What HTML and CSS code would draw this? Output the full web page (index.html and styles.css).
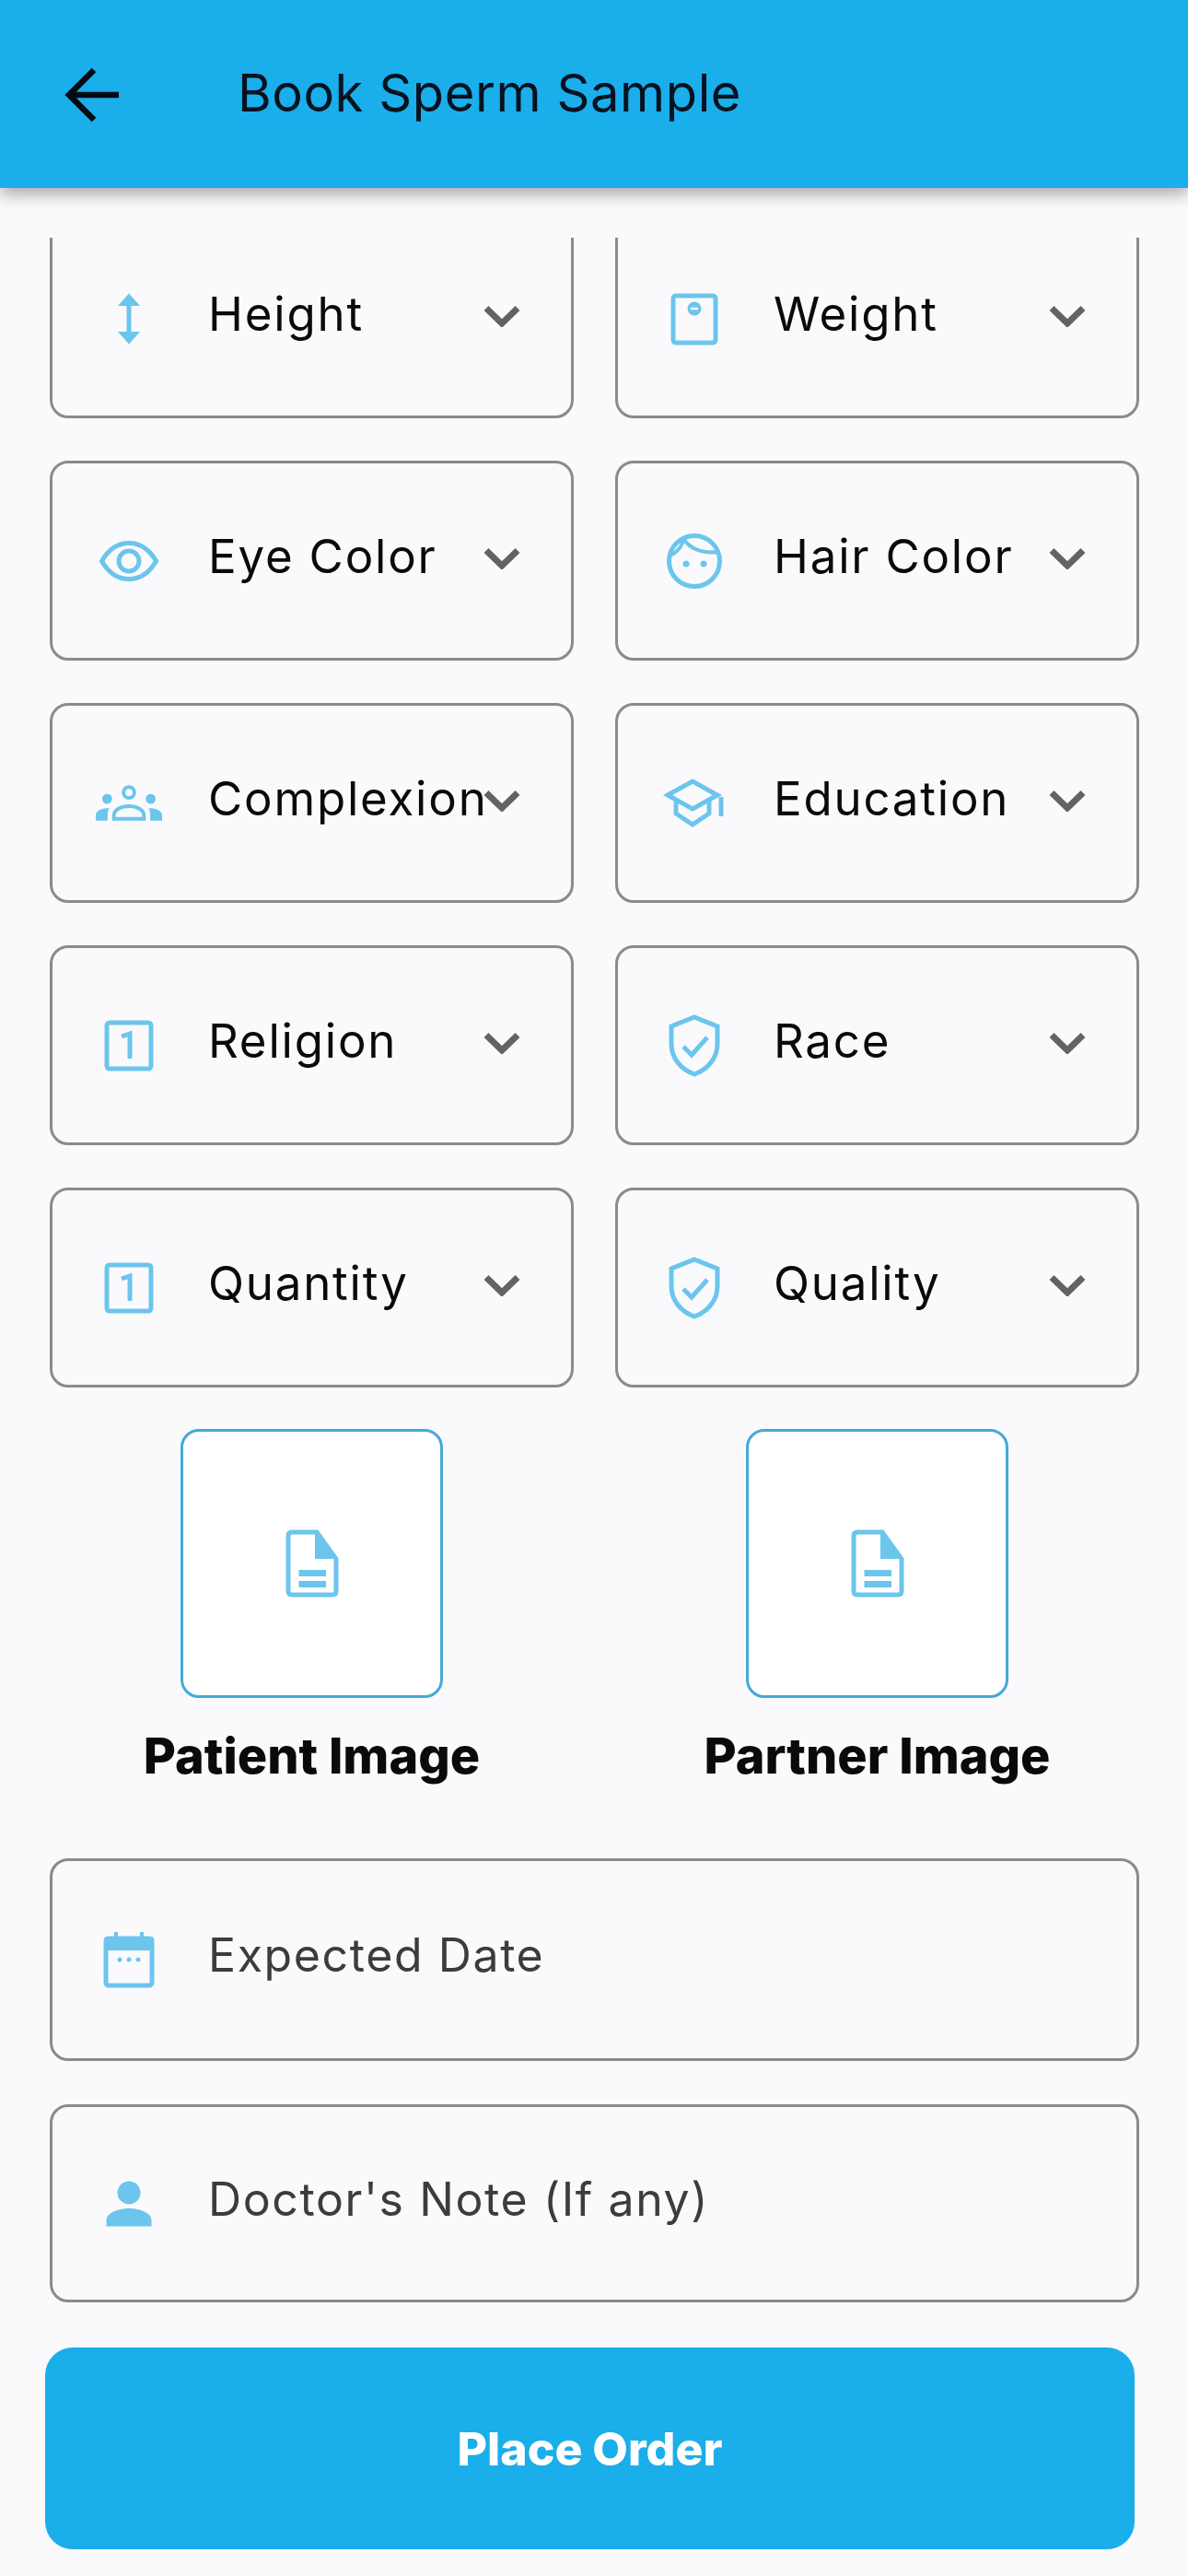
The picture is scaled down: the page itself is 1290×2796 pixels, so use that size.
FILE: index.html
```html
<!DOCTYPE html>
<html lang="en">
<head>
    <meta charset="UTF-8">
    <meta name="viewport" content="width=device-width, initial-scale=1.0">
    <title>Book Sperm Sample</title>
    <link rel="stylesheet" href="styles.css">
</head>
<body>
    <!-- shared icons -->
    <svg class="icon-defs" aria-hidden="true">
        <symbol id="i-chevron" viewBox="0 0 40 24">
            <path class="chev" d="M3 3.5L20 20L37 3.5"/>
        </symbol>
        <symbol id="i-height" viewBox="0 0 72 72">
            <path class="line" d="M36 18V54"/>
            <path class="solid" d="M36 8.5L48 22H24ZM36 63.5L48 50H24Z"/>
        </symbol>
        <symbol id="i-weight" viewBox="0 0 72 72">
            <rect class="line" x="13" y="11" width="46" height="51" rx="3"/>
            <circle class="solid" cx="36" cy="25" r="7.5"/>
            <path class="cut" d="M32 25H40"/>
        </symbol>
        <symbol id="i-eye" viewBox="0 0 72 72">
            <path class="line" d="M6.500 36C14 23 24 16.500 36 16.500S58 23 65.500 36C58 49 48 55.500 36 55.500S14 49 6.500 36Z"/>
            <circle class="line" cx="36" cy="36" r="11"/>
        </symbol>
        <symbol id="i-face" viewBox="0 0 72 72">
            <circle class="line" cx="36" cy="36" r="27.500"/>
            <path class="thin" d="M24 11C23 20 17 27 9 30M24 11C31 24 47 28 63 26"/>
            <circle class="solid" cx="27" cy="39" r="3.500"/>
            <circle class="solid" cx="46" cy="39" r="3.500"/>
        </symbol>
        <symbol id="i-groups" viewBox="0 0 73 72">
            <circle class="thin" cx="36.500" cy="24" r="6"/>
            <path class="thin" d="M20 53V49C20 43 28 39 36.500 39S53 43 53 49V53Z"/>
            <circle class="solid" cx="12.500" cy="31" r="5.500"/>
            <circle class="solid" cx="60.500" cy="31" r="5.500"/>
            <path class="solid" d="M0 55V49C0 44 7 41 15 41C13 44 13 47 13 55Z"/>
            <path class="solid" d="M73 55V49C73 44 66 41 58 41C60 44 60 47 60 55Z"/>
        </symbol>
        <symbol id="i-school" viewBox="0 0 72 72">
            <path class="line" d="M7 27L34 12L61 27L34 42Z"/>
            <path class="line" d="M16 33V47L34 59L52 47V33"/>
            <path class="line" d="M65 29V50"/>
        </symbol>
        <symbol id="i-number" viewBox="0 0 72 72">
            <rect class="line" x="12" y="11" width="48" height="50" rx="3"/>
            <path class="line" d="M28 26L37 23V50"/>
        </symbol>
        <symbol id="i-shield" viewBox="0 0 72 72">
            <path class="line" d="M36 5L61 15V34C61 50 50 62 36 67C22 62 11 50 11 34V15Z"/>
            <path class="line" d="M24 37L33 46L50 27"/>
        </symbol>
        <symbol id="i-file" viewBox="0 0 80 80">
            <path class="line" d="M18 6H45L66 35V70Q66 74 62 74H18Q14 74 14 70V10Q14 6 18 6Z"/>
            <path class="solid" d="M43 6L68 35H43Z"/>
            <path class="bar" d="M25.500 50.500H55M25.500 62.500H55"/>
        </symbol>
        <symbol id="i-calendar" viewBox="0 0 72 72">
            <rect class="line" x="11" y="13" width="50" height="51" rx="3"/>
            <rect class="solid" x="9" y="11" width="54" height="15" rx="3"/>
            <path class="thin" d="M22 6V13M50 6V13"/>
            <circle class="solid" cx="26" cy="36" r="2.500"/>
            <circle class="solid" cx="36" cy="36" r="2.500"/>
            <circle class="solid" cx="46" cy="36" r="2.500"/>
        </symbol>
        <symbol id="i-person" viewBox="0 0 72 72">
            <circle class="solid" cx="36" cy="24" r="12.500"/>
            <path class="solid" d="M11.500 60.500V54C11.500 46 24 41 36 41S60.500 46 60.500 54V60.500Z"/>
        </symbol>
    </svg>

    <header class="app-bar">
        <svg class="back-icon" viewBox="0 0 64 64">
            <path d="M60 32H8M33 5L6 32L33 59"/>
        </svg>
        <h1 class="app-title">Book Sperm Sample</h1>
    </header>

    <main class="form-area">
        <div class="field-grid">
            <div class="field">
                <svg class="field-icon"><use href="#i-height"/></svg>
                <span class="field-label">Height</span>
                <svg class="chevron"><use href="#i-chevron"/></svg>
            </div>
            <div class="field">
                <svg class="field-icon"><use href="#i-weight"/></svg>
                <span class="field-label">Weight</span>
                <svg class="chevron"><use href="#i-chevron"/></svg>
            </div>
            <div class="field">
                <svg class="field-icon"><use href="#i-eye"/></svg>
                <span class="field-label">Eye Color</span>
                <svg class="chevron"><use href="#i-chevron"/></svg>
            </div>
            <div class="field">
                <svg class="field-icon"><use href="#i-face"/></svg>
                <span class="field-label">Hair Color</span>
                <svg class="chevron"><use href="#i-chevron"/></svg>
            </div>
            <div class="field">
                <svg class="field-icon"><use href="#i-groups"/></svg>
                <span class="field-label">Complexion</span>
                <svg class="chevron"><use href="#i-chevron"/></svg>
            </div>
            <div class="field">
                <svg class="field-icon"><use href="#i-school"/></svg>
                <span class="field-label">Education</span>
                <svg class="chevron"><use href="#i-chevron"/></svg>
            </div>
            <div class="field">
                <svg class="field-icon"><use href="#i-number"/></svg>
                <span class="field-label">Religion</span>
                <svg class="chevron"><use href="#i-chevron"/></svg>
            </div>
            <div class="field">
                <svg class="field-icon"><use href="#i-shield"/></svg>
                <span class="field-label">Race</span>
                <svg class="chevron"><use href="#i-chevron"/></svg>
            </div>
            <div class="field">
                <svg class="field-icon"><use href="#i-number"/></svg>
                <span class="field-label">Quantity</span>
                <svg class="chevron"><use href="#i-chevron"/></svg>
            </div>
            <div class="field">
                <svg class="field-icon"><use href="#i-shield"/></svg>
                <span class="field-label">Quality</span>
                <svg class="chevron"><use href="#i-chevron"/></svg>
            </div>
        </div>

        <div class="upload-grid">
            <div class="upload">
                <div class="upload-box"><svg class="upload-icon"><use href="#i-file"/></svg></div>
                <div class="upload-label">Patient Image</div>
            </div>
            <div class="upload">
                <div class="upload-box"><svg class="upload-icon"><use href="#i-file"/></svg></div>
                <div class="upload-label">Partner Image</div>
            </div>
        </div>

        <div class="field wide date-field">
            <svg class="field-icon"><use href="#i-calendar"/></svg>
            <span class="field-label hint">Expected Date</span>
        </div>
        <div class="field wide note-field">
            <svg class="field-icon"><use href="#i-person"/></svg>
            <span class="field-label hint">Doctor's Note (If any)</span>
        </div>
    </main>

    <div class="order-wrap">
        <button class="order-btn">Place Order</button>
    </div>
</body>
</html>
```
FILE: styles.css
```css
* {
    box-sizing: border-box;
}

body {
    margin: 0;
    height: 2796px;
    overflow: hidden;
    background: #fafafd;
    font-family: "Inter", "Liberation Sans", sans-serif;
    color: #0a0a0a;
}

.icon-defs {
    display: none;
}

/* icon parts */
.line {
    fill: none;
    stroke: #6cc5ec;
    stroke-width: 5;
}

.thin {
    fill: none;
    stroke: #6cc5ec;
    stroke-width: 4;
}

.solid {
    fill: #6cc5ec;
}

.bar {
    fill: none;
    stroke: #6cc5ec;
    stroke-width: 7;
}

.cut {
    fill: none;
    stroke: #fafafd;
    stroke-width: 2.5;
}

.chev {
    fill: none;
    stroke: #636363;
    stroke-width: 7;
}

/* top bar */
.app-bar {
    position: relative;
    z-index: 2;
    height: 204px;
    padding: 0 0 0 64px;
    display: flex;
    align-items: center;
    background: #1aaeeb;
    box-shadow: 0 7px 16px rgba(0, 0, 0, 0.32);
}

.back-icon {
    width: 74px;
    height: 64px;
    margin-top: 1px;
    flex-shrink: 0;
}

.back-icon path {
    fill: none;
    stroke: #050a12;
    stroke-width: 6.500;
}

.app-title {
    margin: -2px 0 0 120px;
    font-size: 56px;
    font-weight: 400;
    letter-spacing: 0.6px;
    color: #07121e;
}

.form-area {
    height: 2290px;
    margin-top: 54px;
    padding: 0 53px 0 54px;
    overflow: hidden;
}

.field-grid {
    display: grid;
    grid-template-columns: 569px 569px;
    column-gap: 45px;
    row-gap: 46px;
    margin-top: -21px;
}

.field {
    height: 217px;
    padding: 0 55px 0 47px;
    display: flex;
    align-items: center;
    border: 3px solid #8b8b8b;
    border-radius: 20px;
}

.field-icon {
    width: 72px;
    height: 72px;
    flex-shrink: 0;
    margin-right: 50px;
}

.field-label {
    flex: 1;
    width: 0;
    margin-bottom: 10px;
    font-size: 51px;
    letter-spacing: 1.8px;
    white-space: nowrap;
}

.chevron {
    width: 40px;
    height: 24px;
    flex-shrink: 0;
    margin-bottom: 6px;
}

/* image pickers */
.upload-grid {
    display: grid;
    grid-template-columns: 569px 569px;
    column-gap: 45px;
    margin-top: 45px;
}

.upload {
    display: flex;
    flex-direction: column;
    align-items: center;
}

.upload-box {
    width: 285px;
    height: 292px;
    display: flex;
    align-items: center;
    justify-content: center;
    background: #fff;
    border: 3px solid #45a9d6;
    border-radius: 20px;
}

.upload-icon {
    width: 80px;
    height: 80px;
}

.upload-label {
    margin-top: 23px;
    height: 80px;
    line-height: 80px;
    font-size: 54px;
    font-weight: 800;
    white-space: nowrap;
}

.wide {
    width: 1183px;
}

.date-field {
    height: 220px;
    margin-top: 71px;
}

.note-field {
    height: 215px;
    margin-top: 47px;
}

.hint {
    color: #3c3c3c;
    font-size: 50px;
    letter-spacing: 1.6px;
}

/* bottom action */
.order-wrap {
    padding: 0 58px 0 49px;
}

.order-btn {
    display: block;
    width: 100%;
    height: 219px;
    border: 0;
    border-radius: 30px;
    background: #1aaeeb;
    color: #fff;
    font-family: inherit;
    font-size: 50px;
    font-weight: 800;
}
```
